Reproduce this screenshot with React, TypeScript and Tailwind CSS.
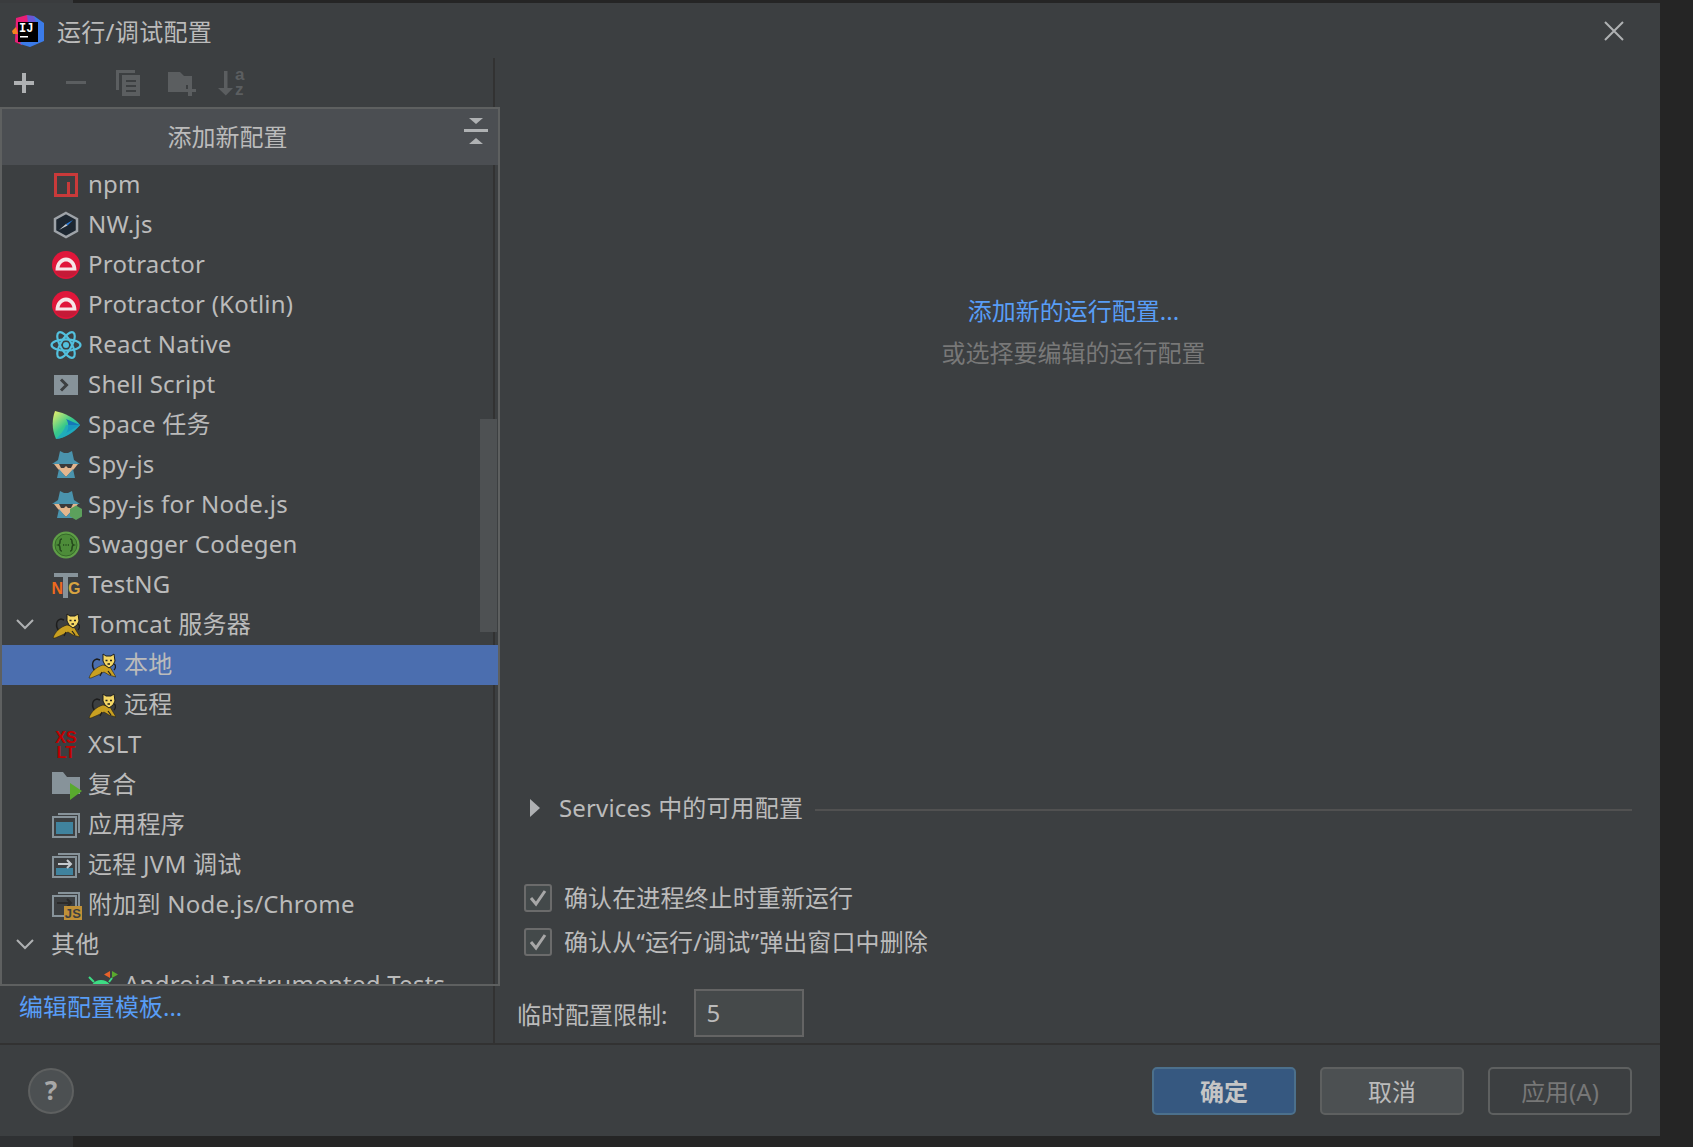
import { ReactNode } from "react";

const font = "font-['Noto_Sans','Noto_Sans_CJK_SC',sans-serif]";

function Npm() {
  return (
    <svg viewBox="0 0 28 28" className="h-7 w-7">
      <path fill="#c93a3a" fillRule="evenodd" d="M2 2h24v24H2zM5 5v18h10V11h3v12h5V5z" />
    </svg>
  );
}

function NwJs() {
  return (
    <svg viewBox="0 0 28 28" className="h-7 w-7">
      <path d="M14 2 25 8v12l-11 6-11-6V8z" fill="#1d2731" stroke="#9ea3a8" strokeWidth="2.500" />
      <path d="M21 9 14 13l1.500 1.500z" fill="#2a7fe0" />
      <path d="M7 19 14 13l1.500 1.500z" fill="#c7ccd1" />
    </svg>
  );
}

function Protractor() {
  return (
    <svg viewBox="0 0 28 28" className="h-7 w-7">
      <circle cx="14" cy="14" r="14" fill="#e0163a" />
      <path d="M3.500 20h21l-1 2.500a14 14 0 0 1-19 0z" fill="#b91c36" opacity="0.7" />
      <path fillRule="evenodd" d="M3.500 19.500C3.500 12 8 6.500 14 6.500s10.500 5.500 10.500 13zM7.500 16.500h13c-.8-3.500-3.200-6-6.500-6s-5.700 2.500-6.500 6z" fill="#f5e6e8" />
    </svg>
  );
}

function ReactNative() {
  return (
    <svg viewBox="0 0 32 28" className="-mx-0.5 h-7 w-8" fill="none" stroke="#53c1de" strokeWidth="2.200">
      <ellipse cx="16" cy="14" rx="14.500" ry="5.600" />
      <ellipse cx="16" cy="14" rx="14.500" ry="5.600" transform="rotate(60 16 14)" />
      <ellipse cx="16" cy="14" rx="14.500" ry="5.600" transform="rotate(120 16 14)" />
      <circle cx="16" cy="14" r="3" fill="#53c1de" stroke="none" />
    </svg>
  );
}

function ShellScript() {
  return (
    <svg viewBox="0 0 28 28" className="h-7 w-7">
      <rect x="2" y="4" width="24" height="20" fill="#87939a" />
      <path d="m9 8.500 5.500 5.500L9 19.500" fill="none" stroke="#3c3f41" strokeWidth="3" />
    </svg>
  );
}

function Space() {
  return (
    <svg viewBox="0 0 28 28" className="h-7 w-7">
      <defs>
        <linearGradient id="space-a" x1="0" y1="0" x2="0.9" y2="1">
          <stop offset="0" stopColor="#f4f06a" />
          <stop offset="0.5" stopColor="#38c98a" />
          <stop offset="1" stopColor="#17a6d8" />
        </linearGradient>
      </defs>
      <path d="M3 0C0 8-.5 18 4 28c9-1 18-7 24-14C23 7 13 2 3 0z" fill="url(#space-a)" />
      <path d="M14 8 28 14 14 22c3-4 3-10 0-14z" fill="#1478b8" />
      <path d="M4 28c4-4 8-8 10-14h14C23 21 13 27 4 28z" fill="#1ba4c2" opacity="0.7" />
    </svg>
  );
}

function SpyJs({ node = false }: { node?: boolean }) {
  return (
    <svg viewBox="0 0 30 30" className="-mr-0.5 h-[30px] w-[30px]">
      <path d="M6 10 8 1l4 2h4l4-2 2 9z" fill="#4a93ad" />
      <path d="M0 14 6 10h16l6 4z" fill="#4a93ad" />
      <path d="M2 14h24l-4 5-8 8-8-8z" fill="#e3b68f" />
      <path d="M7 14h14l-2 4h-3l-2-2-2 2H9z" fill="#3a3a3a" />
      <path d="M5 28 7 19l7 8 7-8 2 9z" fill="#4a93ad" />
      {node && <path d="M24 15.500 30 19v7.500L24 30l-6-3.500V19z" fill="#5ca05c" />}
    </svg>
  );
}

function Swagger() {
  return (
    <svg viewBox="0 0 28 28" className="h-7 w-7">
      <circle cx="14" cy="14" r="13.500" fill="#5f9e47" />
      <circle cx="14" cy="14" r="11" fill="#4d8c39" stroke="#2f5e25" strokeWidth="0.800" />
      <path d="M10 8c-2 0-2 1-2 3s0 2.500-1.500 3c1.500.5 1.500 1 1.500 3s0 3 2 3M18 8c2 0 2 1 2 3s0 2.500 1.500 3c-1.500.5-1.500 1-1.500 3s0 3-2 3" fill="none" stroke="#24481c" strokeWidth="1.600" />
      <path d="M11 14h1.200M13.400 14h1.200M15.800 14h1.200" stroke="#24481c" strokeWidth="1.600" />
    </svg>
  );
}

function TestNg() {
  return (
    <svg viewBox="0 0 28 28" className="h-7 w-7">
      <path d="M2 2h24v4H16v21h-5V6H2z" fill="#87939a" />
      <text x="-0.500" y="22.500" fontFamily="Liberation Sans, sans-serif" fontWeight="700" fontSize="16" fill="#ee6a1e">N</text>
      <text x="16" y="22.500" fontFamily="Liberation Sans, sans-serif" fontWeight="700" fontSize="16" fill="#d9a441">G</text>
    </svg>
  );
}

function Tomcat() {
  return (
    <svg viewBox="0 0 28 28" className="h-7 w-7">
      <path d="M7 20C3 15 4 9 9 8l3 1" fill="none" stroke="#1d1d1d" strokeWidth="1.400" />
      <path d="M1 27C3 21 8 16 15 14l7 2 6 10-7-2-5-3-6 3-7 3z" fill="#c9a021" stroke="#2a2410" strokeWidth="0.600" />
      <path d="M14 21l-2 4M20 20l3 4" stroke="#1d1d1d" strokeWidth="1.200" />
      <path d="M15 3l3 2h5l3-2 1 7-2 4-4 3-4-3-2-4z" fill="#f4d765" stroke="#1d1d1d" strokeWidth="1" />
      <path d="M17.500 9.500h2M22 9.500h2M19.500 13h2.500" stroke="#1d1d1d" strokeWidth="1.400" />
      <path d="M26 13c2 1 2 4 0 6" fill="none" stroke="#1d1d1d" strokeWidth="1.300" />
    </svg>
  );
}

function Xslt() {
  return (
    <span className="flex h-7 w-7 flex-col items-center justify-center font-['Liberation_Sans',sans-serif] text-[16px] leading-[15px] font-bold tracking-normal text-[#c00000]">
      <span>XS</span>
      <span>LT</span>
    </span>
  );
}

function Compound() {
  return (
    <svg viewBox="0 0 30 30" className="-mr-0.5 h-[30px] w-[30px]">
      <path d="M0 2h11l4 5h13v17H0z" fill="#87939a" />
      <path d="M18 13l12 8-12 9z" fill="#59a92e" />
    </svg>
  );
}

function Application() {
  return (
    <svg viewBox="0 0 28 28" className="h-7 w-7">
      <path d="M6 2h22v20h-2V4H6z" fill="#87939a" />
      <path d="M1 6h23v20H1z" fill="none" stroke="#87939a" strokeWidth="2" />
      <rect x="4" y="11" width="17" height="12" fill="#40839e" />
    </svg>
  );
}

function RemoteJvm() {
  return (
    <svg viewBox="0 0 28 28" className="h-7 w-7">
      <path d="M6 2h22v20h-2V4H6z" fill="#87939a" />
      <path d="M1 6h23v20H1z" fill="none" stroke="#87939a" strokeWidth="2" />
      <rect x="4" y="17" width="17" height="7" fill="#40839e" />
      <path d="M6 13h12M15 9l4 4-4 4" fill="none" stroke="#c5cace" strokeWidth="2" />
    </svg>
  );
}

function AttachNode() {
  return (
    <svg viewBox="0 0 30 30" className="-mr-0.5 h-[30px] w-[30px]">
      <path d="M6 2h22v14h-2V4H6z" fill="#87939a" />
      <path d="M1 6h23v20H1z" fill="none" stroke="#87939a" strokeWidth="2" />
      <path d="M5 13h13M15 9l4 4-4 4" fill="none" stroke="#2b2b2b" strokeWidth="2" />
      <rect x="12" y="16" width="18" height="14" fill="#c09037" />
      <text x="21" y="28" textAnchor="middle" fontFamily="Liberation Sans, sans-serif" fontWeight="700" fontSize="13" fill="#3c3f41">JS</text>
    </svg>
  );
}

function Android() {
  return (
    <svg viewBox="0 0 30 28" className="-mr-0.5 h-7 w-[30px]">
      <path d="M22 0l-6 3.500L22 7z" fill="#e8622a" />
      <path d="M24 0l6 3.500L24 7z" fill="#59a92e" />
      <path d="M1 6l5 5M24 7l-3 4" stroke="#3ddc84" strokeWidth="2" />
      <path d="M2 20c0-6 5-11 11-11s11 5 11 11z" fill="#3ddc84" />
    </svg>
  );
}

function Chevron() {
  return (
    <svg viewBox="0 0 20 12" className="h-3 w-5" fill="none" stroke="#afb1b3" strokeWidth="2">
      <path d="M2 2l8 8 8-8" />
    </svg>
  );
}

function Logo() {
  return (
    <svg viewBox="0 0 32 32" className="h-8 w-8">
      <path d="M4 3 15 0l5 8-10 22-7-3z" fill="#e91e76" />
      <path d="M22 1 32 8v18l-14 6-10-3 8-19z" fill="#3b7be8" />
      <path d="M15 0l7 1 2 7h-8z" fill="#6b57d2" />
      <path d="M0 16 4 12l2 7-5 0z" fill="#f58220" />
      <rect x="6" y="7" width="20" height="20" fill="#000" />
      <text x="7" y="17" fontFamily="Liberation Mono, monospace" fontWeight="700" fontSize="12" fill="#fff">IJ</text>
      <rect x="8" y="21" width="8" height="1.500" fill="#fff" />
    </svg>
  );
}

function Toolbar() {
  return (
    <div className="flex h-[49px] items-center pl-[14px]">
      <svg viewBox="0 0 20 20" className="h-5 w-5">
        <path d="M8 0h4v8h8v4h-8v8H8v-8H0V8h8z" fill="#afb1b3" />
      </svg>
      <svg viewBox="0 0 20 4" className="ml-[32px] h-1 w-5">
        <rect width="20" height="3" fill="#5b5e60" />
      </svg>
      <svg viewBox="0 0 24 26" className="ml-[30px] h-[26px] w-6">
        <path d="M0 0h19v3H3v17H0z" fill="#5b5e60" />
        <path fillRule="evenodd" d="M6 5h18v21H6zM10 10v2h10v-2zM10 15v2h10v-2zM10 20v2h10v-2z" fill="#5b5e60" />
      </svg>
      <svg viewBox="0 0 28 26" className="ml-[28px] h-[26px] w-7">
        <path d="M0 2h12l4 4h8v9h-6v7H0z" fill="#5b5e60" />
        <path d="M20 15h4v4h4v3h-4v4h-4v-4h-4v-3h4z" fill="#5b5e60" />
      </svg>
      <svg viewBox="0 0 27 26" className="ml-[22px] h-[26px] w-[27px]">
        <path d="M6 1h3.500v17H15l-7.200 7.500L0 18h6z" fill="#5b5e60" />
        <text x="17" y="10" fontFamily="Liberation Sans, sans-serif" fontWeight="700" fontSize="17" fill="#5b5e60">a</text>
        <text x="17" y="25" fontFamily="Liberation Sans, sans-serif" fontWeight="700" fontSize="17" fill="#5b5e60">z</text>
      </svg>
    </div>
  );
}

type Row = { label: string; icon?: ReactNode; depth?: number; open?: boolean; selected?: boolean };

const rows: Row[] = [
  { label: "npm", icon: <Npm /> },
  { label: "NW.js", icon: <NwJs /> },
  { label: "Protractor", icon: <Protractor /> },
  { label: "Protractor (Kotlin)", icon: <Protractor /> },
  { label: "React Native", icon: <ReactNative /> },
  { label: "Shell Script", icon: <ShellScript /> },
  { label: "Space 任务", icon: <Space /> },
  { label: "Spy-js", icon: <SpyJs /> },
  { label: "Spy-js for Node.js", icon: <SpyJs node /> },
  { label: "Swagger Codegen", icon: <Swagger /> },
  { label: "TestNG", icon: <TestNg /> },
  { label: "Tomcat 服务器", icon: <Tomcat />, open: true },
  { label: "本地", icon: <Tomcat />, depth: 1, selected: true },
  { label: "远程", icon: <Tomcat />, depth: 1 },
  { label: "XSLT", icon: <Xslt /> },
  { label: "复合", icon: <Compound /> },
  { label: "应用程序", icon: <Application /> },
  { label: "远程 JVM 调试", icon: <RemoteJvm /> },
  { label: "附加到 Node.js/Chrome", icon: <AttachNode /> },
  { label: "其他", open: true },
  { label: "Android Instrumented Tests", icon: <Android />, depth: 1 },
];

function TreeRow({ row }: { row: Row }) {
  return (
    <div className={`relative flex h-10 shrink-0 items-center gap-2 tracking-[0.25px] ${row.depth ? "pl-[86px]" : "pl-[50px]"} ${row.selected ? "bg-[#4b6eaf]" : ""}`}>
      {row.open && (
        <span className="absolute top-[13px] left-[13px]">
          <Chevron />
        </span>
      )}
      {row.icon}
      <span className={`mt-[-2px] whitespace-nowrap ${row.icon ? "" : "-ml-px"}`}>{row.label}</span>
    </div>
  );
}

function ConfigTree() {
  return (
    <div className="relative flex h-[879px] w-[500px] flex-col overflow-hidden border-2 border-[#5e6060]">
      <div className="relative flex h-[56px] shrink-0 items-center justify-center bg-[#4b4e52] pr-[45px]">
        <span>添加新配置</span>
        <svg viewBox="0 0 24 26" className="absolute top-[9px] right-[10px] h-[26px] w-6">
          <path d="M5 0h14l-7 6zM0 11h24v3H0zM12 20l7 6H5z" fill="#afb1b3" />
        </svg>
      </div>
      <div className="flex flex-col">
        {rows.map((row) => (
          <TreeRow key={row.label} row={row} />
        ))}
      </div>
      <div className="absolute top-[310px] right-[1px] h-[213px] w-[17px] bg-[#4e5153]" />
    </div>
  );
}

function CheckRow({ label }: { label: string }) {
  return (
    <div className="flex h-7 items-center gap-[12px]">
      <span className="flex h-7 w-7 items-center justify-center rounded-[3px] border-2 border-[#6b6b6b] bg-[#43494a]">
        <svg viewBox="0 0 20 20" className="h-5 w-5" fill="none" stroke="#a7a7a7" strokeWidth="3">
          <path d="M3 10l5 6 9-13" />
        </svg>
      </span>
      <span className="whitespace-nowrap tracking-[0.1px]">{label}</span>
    </div>
  );
}

function RightPane() {
  return (
    <div className="flex flex-1 flex-col pl-[28px]">
      <div className="flex flex-col items-center pt-[232px] pr-[36px]">
        <span className="h-[42px] leading-[42px] text-[#589df6]">添加新的运行配置...</span>
        <span className="h-[42px] leading-[42px] text-[#787878]">或选择要编辑的运行配置</span>
      </div>
      <div className="mt-[414px] flex h-10 items-center pr-[28px]">
        <svg viewBox="0 0 10 18" className="ml-[7px] h-[18px] w-[10px]">
          <path d="M0 0l10 9-10 9z" fill="#afb1b3" />
        </svg>
        <span className="ml-[19px] whitespace-nowrap tracking-[0.15px]">Services 中的可用配置</span>
        <span className="mt-[3px] ml-[12px] h-[2px] flex-1 bg-[#515151]" />
      </div>
      <div className="mt-[56px] ml-px flex flex-col gap-[16px]">
        <CheckRow label="确认在进程终止时重新运行" />
        <CheckRow label="确认从“运行/调试”弹出窗口中删除" />
      </div>
      <div className="mt-[33px] -ml-[6px] flex items-center gap-[27px]">
        <span className="mt-[3px] whitespace-nowrap">临时配置限制:</span>
        <div className="flex h-[48px] w-[110px] items-center border-2 border-[#646464] bg-[#45494a] pl-[10px]">5</div>
      </div>
    </div>
  );
}

export default function App() {
  return (
    <div className={`flex h-screen flex-col overflow-hidden bg-[#252525] text-[24px] text-[#bbbbbb] ${font}`}>
      <div className="flex h-[3px] shrink-0">
        <div className="w-[73px] bg-[#3a3c3e]" />
      </div>
      <div className="flex w-[1660px] flex-col bg-[#3c3f41]">
        <div className="flex h-[55px] items-center pl-[12px]">
          <Logo />
          <span className="mt-[2px] ml-[13px] tracking-[0.3px]">运行/调试配置</span>
          <svg viewBox="0 0 20 20" className="mr-[36px] ml-auto h-5 w-5" fill="none" stroke="#afb1b3" strokeWidth="2">
            <path d="M1 1l18 18M19 1 1 19" />
          </svg>
        </div>
        <div className="flex h-[985px]">
          <div className="flex w-[493px] flex-col">
            <Toolbar />
            <ConfigTree />
            <div className="h-[57px] pl-[19px] leading-[41px] text-[#589df6]">编辑配置模板...</div>
          </div>
          <div className="flex flex-1 border-l-2 border-[#323232]">
            <RightPane />
          </div>
        </div>
        <div className="flex h-[93px] items-center border-t-2 border-[#323232] pr-[28px] pl-[28px]">
          <span className="flex h-[46px] w-[46px] items-center justify-center rounded-full border-2 border-[#5e6060] bg-[#4c5052] text-[26px] font-bold text-[#a8a8a8]">?</span>
          <button className="ml-auto h-[48px] w-[144px] rounded-[5px] border-2 border-[#4c708c] bg-[#365880] pt-[2px] font-bold text-[#c5c5c5]">确定</button>
          <button className="ml-[24px] h-[48px] w-[144px] rounded-[5px] border-2 border-[#5e6060] bg-[#4c5052] pt-[2px]">取消</button>
          <button className="ml-[24px] h-[48px] w-[144px] rounded-[5px] border-2 border-[#5e6060] pt-[2px] text-[#777777]">应用(A)</button>
        </div>
      </div>
      <div className="flex flex-1">
        <div className="w-[73px] bg-[#2f3133]" />
      </div>
    </div>
  );
}
